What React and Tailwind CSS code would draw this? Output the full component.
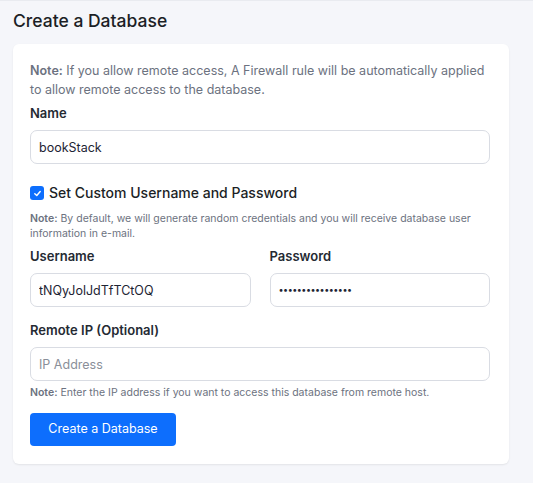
import React from "react";

export default function App() {
  const font = { fontFamily: "Inter, 'Noto Sans', sans-serif" };
  return (
    <div className="min-h-[483px] w-[533px] bg-[#f5f6fa] border-t border-[#e9ebf0] text-[#1d2433]" style={font}>
      <h1 className="pl-[13px] pt-[8px] text-[17.5px] leading-[24px] font-medium text-[#1c1f26]">Create a Database</h1>
      <div className="mx-[13px] mt-[11px] w-[496px] rounded-[6px] bg-white shadow-[0_1px_2px_rgba(0,0,0,0.08)] pl-[17px] pr-[19px] pt-[17px] pb-[18px]">
        <p className="text-[12.5px] leading-[19px] text-[#6c7280]">
          <span className="font-semibold">Note:</span> If you allow remote access, A Firewall rule will be automatically applied to allow remote access to the database.
        </p>
        <label className="mt-[5px] block text-[13px] leading-[18px] font-semibold text-[#252a33]">Name</label>
        <input
          className="mt-[8px] block h-[34px] w-full rounded-[7px] border border-[#d9dce3] px-[8px] text-[12.5px] text-[#1d2433] outline-none"
          defaultValue="bookStack"
        />
        <div className="mt-[20px] flex items-center gap-[5px]">
          <span className="flex h-[14px] w-[14px] items-center justify-center rounded-[3px] bg-[#0d6efd]">
            <svg width="9" height="9" viewBox="0 0 10 10" fill="none">
              <path d="M2 5.2 L4.2 7.3 L8 2.8" stroke="white" strokeWidth="1.6" strokeLinecap="round" strokeLinejoin="round" />
            </svg>
          </span>
          <span className="text-[14px] leading-[18px] font-medium text-[#1c1f26]">Set Custom Username and Password</span>
        </div>
        <p className="mt-[9px] text-[10.5px] leading-[15px] text-[#6c7280]">
          <span className="font-semibold">Note:</span> By default, we will generate random credentials and you will receive database user information in e-mail.
        </p>
        <div className="mt-[6px] grid grid-cols-2 gap-x-[19px]">
          <div>
            <label className="block text-[13px] leading-[18px] font-semibold text-[#252a33]">Username</label>
            <input
              className="mt-[8px] block h-[34px] w-full rounded-[7px] border border-[#d9dce3] px-[8px] text-[12.5px] text-[#1d2433] outline-none"
              defaultValue="tNQyJolJdTfTCtOQ"
            />
          </div>
          <div>
            <label className="block text-[13px] leading-[18px] font-semibold text-[#252a33]">Password</label>
            <div className="mt-[8px] flex h-[34px] w-full items-center rounded-[7px] border border-[#d9dce3] px-[8px] text-[9px] tracking-[-0.5px] text-[#1d2433]">
              ••••••••••••••••
            </div>
          </div>
        </div>
        <label className="mt-[14px] block text-[13px] leading-[18px] font-semibold text-[#252a33]">Remote IP (Optional)</label>
        <input
          className="mt-[8px] block h-[34px] w-full rounded-[7px] border border-[#d9dce3] px-[8px] text-[12.5px] text-[#1d2433] outline-none placeholder:text-[#8a8f99]"
          placeholder="IP Address"
        />
        <p className="mt-[4px] text-[10.5px] leading-[15px] text-[#6c7280]">
          <span className="font-semibold">Note:</span> Enter the IP address if you want to access this database from remote host.
        </p>
        <button className="mt-[13px] block h-[33px] w-[146px] rounded-[4px] bg-[#0d6efd] text-[12.5px] text-white">Create a Database</button>
      </div>
    </div>
  );
}
